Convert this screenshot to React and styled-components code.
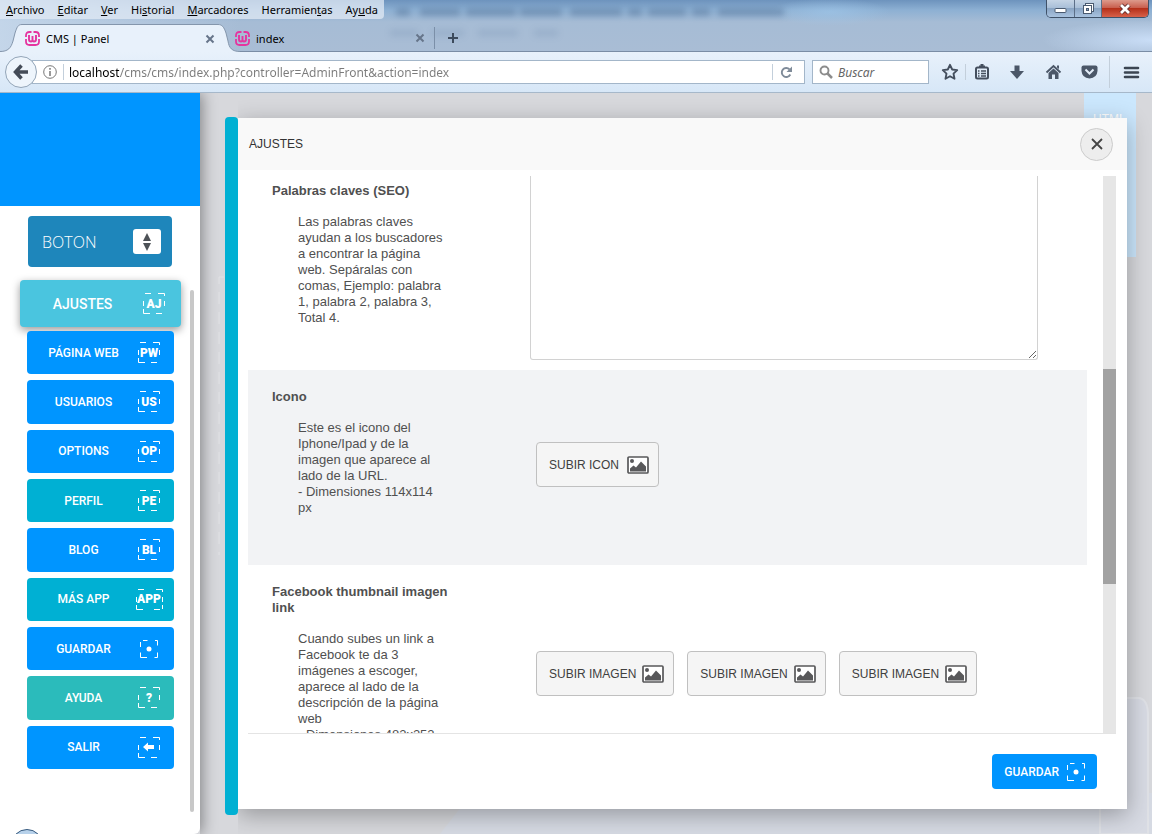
import React from 'react';
import styled, { createGlobalStyle, css } from 'styled-components';

const GlobalStyle = createGlobalStyle`
  *, *::before, *::after { box-sizing: border-box; }
  body { margin: 0; font-family: "Liberation Sans", Arial, sans-serif; }
  button { font: inherit; color: inherit; cursor: pointer; }
`;

const uiFont = css`
  font-family: "Noto Sans", "Open Sans", sans-serif;
  font-size: ${(p) => (p.$field ? 12 : 11)}px;
`;

const Window = styled.div`
  display: flex;
  flex-direction: column;
  height: 100vh;
  overflow: hidden;
`;

/* ---------- Browser chrome ---------- */

const TitleArea = styled.header`
  position: relative;
  flex: none;
  background:
    radial-gradient(ellipse 60px 14px at 830px 12px, rgba(160, 200, 235, 0.6), transparent),
    radial-gradient(ellipse 110px 20px at 100% 40px, rgba(205, 225, 250, 0.9), transparent),
    linear-gradient(90deg, rgba(205, 222, 240, 0.75) 0, rgba(205, 222, 240, 0) 240px),
    linear-gradient(#6d93bd 0, #8db0d3 10px, #a6bcd5 22px, #a9bdd5 100%);
`;

const Haze = styled.svg`
  position: absolute;
  top: 0;
  left: 384px;
  width: 420px;
  height: 50px;
`;

const HazeGroup = styled.g`
  filter: blur(3px);
`;

const MenuLine = styled.div`
  display: flex;
  justify-content: space-between;
  height: 24px;
  position: relative;
`;

const MenuBar = styled.nav`
  ${uiFont}
  display: flex;
  align-items: center;
  gap: 13px;
  height: 19px;
  padding: 0 6px;
  background: rgba(225, 234, 244, 0.75);
  border-bottom-right-radius: 4px;
`;

const MenuItem = styled.button`
  padding: 0;
  border: 0;
  background: none;
  color: #000;
  line-height: 16px;
`;

const WindowButtons = styled.div`
  display: flex;
  height: 18px;
  margin-right: 3px;
  border: 1px solid #3f5168;
  border-top: 0;
  border-radius: 0 0 5px 5px;
  overflow: hidden;
`;

const WindowButton = styled.button`
  display: grid;
  place-items: center;
  width: ${(p) => (p.$danger ? 47 : 27)}px;
  padding: 0;
  border: 0;
  border-left: ${(p) => (p.$first ? '0' : '1px solid #5c6f88')};
  background: ${(p) =>
    p.$danger
      ? 'linear-gradient(#dd9a8c 0, #c9604f 45%, #b5301a 50%, #d8614a 100%)'
      : 'linear-gradient(#c5d4e5 0, #a9bfd8 45%, #8aa5c4 50%, #a8c2df 100%)'};
`;

const TabStrip = styled.div`
  ${uiFont}
  position: relative;
  display: flex;
  height: 28px;
  color: #000;
  box-shadow: inset 0 -1px #7a8da5;
`;

const TabEdge = styled.svg`
  flex: none;
  width: 22px;
  height: 28px;
`;

const Tab = styled.div`
  display: flex;
  align-items: center;
  gap: 6px;
  width: 196px;
  height: 28px;
  padding: 0 3px;
  ${(p) =>
    p.$active
      ? css`background: #e8f1fb; border-top: 1px solid #8496ac;`
      : css`margin-left: -8px; margin-right: 6px;`}
`;

const TabTitle = styled.span`
  flex: 1;
`;

const IconButton = styled.button`
  display: grid;
  place-items: center;
  flex: none;
  padding: 0;
  border: 0;
  background: none;
`;

const NewTab = styled(IconButton)`
  width: 37px;
  height: 22px;
  margin-top: 3px;
  border-left: 1px solid #7b8fa8;
`;

const Toolbar = styled.div`
  display: flex;
  align-items: center;
  flex: none;
  height: 41px;
  padding-left: 5px;
  background: linear-gradient(#e8f1fb, #d7e7f7);
  border-bottom: 1px solid #a6b8ca;
`;

const BackButton = styled(IconButton)`
  z-index: 1;
  width: 32px;
  height: 32px;
  border: 1px solid #93a5b8;
  border-radius: 50%;
  background: #eef5fc;
`;

const AddressBar = styled.div`
  ${uiFont}
  display: flex;
  align-items: center;
  flex: 1;
  height: 24px;
  margin-left: -5px;
  padding: 0 4px 0 10px;
  background: #fff;
  border: 1px solid #a3b6c9;
`;

const UrlInput = styled.input`
  flex: 1;
  min-width: 0;
  margin: 0 0 0 5px;
  padding: 0;
  border: 0;
  font: inherit;
  color: transparent;
  background: linear-gradient(90deg, #000 50px, #7b7b7b 50px);
  background-clip: text;
`;

const Rule = styled.span`
  flex: none;
  width: 1px;
  height: ${(p) => p.$height}px;
  margin-left: ${(p) => p.$gap || 0}px;
  background: #c3cfdb;
`;

const SearchBox = styled.label`
  ${uiFont}
  display: flex;
  align-items: center;
  gap: 5px;
  width: 117px;
  height: 24px;
  margin: 0 10px 0 7px;
  padding: 0 6px;
  background: #fff;
  border: 1px solid #a3b6c9;
`;

const SearchInput = styled.input`
  width: 70px;
  padding: 0;
  border: 0;
  font: inherit;
  font-style: italic;
  &::placeholder { color: #666; opacity: 1; }
`;

const ToolButton = styled(IconButton)`
  width: ${(p) => p.$width}px;
  height: 24px;
`;

/* ---------- Page ---------- */

const Page = styled.div`
  position: relative;
  display: flex;
  flex: 1;
  min-height: 0;
  background: #d7d8dc;
`;

const Backdrop = styled.svg`
  position: absolute;
  inset: 0;
  width: 100%;
  height: 100%;
`;

const GhostPanel = styled.div`
  position: absolute;
  top: 0;
  right: 16px;
  width: 52px;
  height: 164px;
  padding: 18px 0 0 9px;
  background: #cbe7fd;
  color: #fff;
  font-size: 12px;
  line-height: 16px;
`;

const Sidebar = styled.aside`
  position: relative;
  display: flex;
  flex-direction: column;
  flex: none;
  width: 200px;
  overflow: hidden;
  background: #fff;
  border-bottom-right-radius: 6px;
`;

const SidebarShadow = styled.div`
  position: relative;
  display: flex;
  box-shadow: 2px 0 14px rgba(0, 0, 0, 0.4);
  clip-path: inset(0 -40px 0 0);
`;

const Brand = styled.div`
  flex: none;
  height: 113px;
  background: #0095ff;
`;

const Picker = styled.button`
  display: flex;
  align-items: center;
  justify-content: space-between;
  flex: none;
  height: 51px;
  margin: 10px 28px 13px;
  padding: 0 11px 0 14px;
  border: 0;
  border-radius: 4px;
  background: #1e86bb;
  color: #fff;
  font-family: "Open Sans", sans-serif;
  font-size: 16px;
  font-weight: 300;
`;

const PickerArrows = styled.span`
  display: grid;
  place-items: center;
  width: 28px;
  height: 25px;
  border-radius: 3px;
  background: #fff;
`;

const MenuScroll = styled.div`
  display: flex;
  justify-content: space-between;
  flex: 1;
  min-height: 0;
  padding: 0 6px 22px 20px;
`;

const SideNav = styled.nav`
  width: 161px;
`;

const SideList = styled.div`
  display: grid;
  grid-auto-rows: 1fr;
  gap: 6px;
  height: 438px;
  margin: 4px 7px 0;
`;

const SideBar = styled.div`
  width: 4px;
  margin-top: 10px;
  border-radius: 2px;
  background: #c8c8c8;
`;

const tones = { blue: '#0095ff', teal: '#00b0d3', green: '#2bbbbb', light: '#4ac5df' };

const SideButton = styled.button`
  display: flex;
  align-items: center;
  width: 100%;
  padding: 0 ${(p) => (p.$large ? 12 : 10)}px 0 6px;
  border: 0;
  border-radius: 4px;
  background: ${(p) => tones[p.$tone]};
  color: #fff;
  font-family: Roboto, sans-serif;
  font-weight: 500;
  font-size: 12px;
  ${(p) =>
    p.$large &&
    css`
      height: 47px;
      font-size: 14px;
      box-shadow: 0 3px 8px rgba(0, 0, 0, 0.4);
    `}
`;

const SideLabel = styled.span`
  flex: 1;
  text-align: center;
`;

const Badge = styled.span`
  position: relative;
  display: grid;
  place-items: center;
  width: 30px;
  height: 24px;
`;

const BadgeFrame = styled.svg`
  position: absolute;
  inset: 0;
  margin: auto;
`;

const BadgeText = styled.span`
  font-size: 12px;
  font-weight: 900;
  line-height: 16px;
`;

const CornerBubble = styled.span`
  position: absolute;
  left: 11px;
  bottom: -27px;
  width: 32px;
  height: 32px;
  border: 1px solid #36597d;
  border-radius: 50%;
  background: #b7d1ea;
`;

const Main = styled.main`
  position: relative;
  display: flex;
  flex: 1;
  min-width: 0;
  padding: 24px 25px 19px;
`;

const Spine = styled.div`
  flex: none;
  width: 13px;
  border-radius: 4px;
  background: #00b0d3;
`;

const Dialog = styled.section`
  display: flex;
  flex-direction: column;
  flex: 1;
  min-width: 0;
  margin: 1px 0 6px;
  background: #fff;
  box-shadow: 0 6px 22px rgba(0, 0, 0, 0.3);
  clip-path: inset(-24px -25px -40px 0);
`;

const DialogHeader = styled.div`
  display: flex;
  align-items: center;
  justify-content: space-between;
  flex: none;
  height: 52px;
  margin-bottom: 6px;
  padding: 0 14px 0 11px;
  background: #f9f9f9;
`;

const DialogTitle = styled.h1`
  margin: 0;
  color: #333;
  font-size: 12px;
  font-weight: 400;
  line-height: 16px;
`;

const CloseButton = styled(IconButton)`
  width: 33px;
  height: 33px;
  border: 1px solid #ccc;
  border-radius: 50%;
  background: #ededed;
`;

const DialogBody = styled.div`
  display: flex;
  flex: 1;
  min-height: 0;
  margin: 0 11px 0 10px;
  border-bottom: 1px solid #e4e4e4;
`;

const Rows = styled.div`
  flex: 1;
  min-width: 0;
  margin-right: 16px;
  overflow: hidden;
`;

const Row = styled.div`
  display: grid;
  grid-template-columns: 258px 1fr;
  min-height: ${(p) => p.$height}px;
  padding: ${(p) => (p.$cut ? '7px 49px 10px 24px' : '19px 49px 25px 24px')};
  background: ${(p) => (p.$shaded ? '#f2f3f5' : '#fff')};
  color: #505050;
  font-size: 13px;
  line-height: 16px;
`;

const RowTitle = styled.h2`
  display: block;
  width: 190px;
  margin: 0 0 15px;
  font-size: 13px;
  font-weight: 700;
`;

const RowHelp = styled.p`
  width: 148px;
  margin: 0 0 0 26px;
`;

const Keywords = styled.textarea`
  display: block;
  width: 100%;
  height: 184px;
  margin-top: -7px;
  border: 1px solid #d2d2d2;
  border-top: 0;
  border-radius: 0 0 3px 3px;
  background: #fff;
  resize: vertical;
`;

const Uploads = styled.div`
  display: flex;
  align-items: center;
  gap: 13px;
  padding-left: 6px;
`;

const UploadButton = styled.button`
  display: flex;
  align-items: center;
  justify-content: space-between;
  gap: 6px;
  min-width: 123px;
  height: 45px;
  padding: 0 9px 0 12px;
  border: 1px solid #c0c0c0;
  border-radius: 4px;
  background: #f5f5f5;
  color: #404040;
  font-size: 12px;
  white-space: nowrap;
`;

const ScrollTrack = styled.div`
  width: 13px;
  padding-top: 193px;
  background: #e6e6e6;
`;

const ScrollThumb = styled.div`
  height: 215px;
  background: #a2a2a2;
`;

const DialogFooter = styled.div`
  display: flex;
  justify-content: flex-end;
  flex: none;
  height: 75px;
  padding: 20px 30px;
`;

const SaveButton = styled.button`
  display: flex;
  align-items: center;
  gap: 8px;
  height: 35px;
  padding: 0 12px;
  border: 0;
  border-radius: 4px;
  background: #0095ff;
  color: #fff;
  font-family: Roboto, sans-serif;
  font-size: 12px;
  font-weight: 500;
`;

/* ---------- Drawings ---------- */

const Logo = () => (
  <svg width="15" height="15" viewBox="0 0 15 15" fill="none" stroke="#e5349f">
    <path d="M6.500 1H4.500Q1 1 1 4.500V6M8.500 1h2Q14 1 14 4.500V6M1 8v2.500Q1 14 4.500 14H10.500Q14 14 14 10.500V8" strokeWidth="1.800" />
    <path d="M4 4V8.500Q4 10.500 6 10.500Q7.500 10.500 7.500 8.500V5V8.500Q7.500 10.500 9 10.500Q11 10.500 11 8.500V4" strokeWidth="1.900" />
  </svg>
);

const TabClose = () => (
  <svg width="10" height="10" viewBox="0 0 10 10" stroke="#66758a" strokeWidth="2">
    <path d="M1.500 1.500l7 7M8.500 1.500l-7 7" />
  </svg>
);

const SaveMark = () => (
  <svg width="18" height="18" viewBox="0 0 18 18" fill="none" stroke="#fff">
    <path d="M3 .5H7.500M.5 2V7M.5 12.500V17.500H7M15 .5H17.500V5.500M17.500 12.500V17.500H14.500" />
    <circle cx="9" cy="9" r="2.500" fill="#fff" stroke="none" />
  </svg>
);

const Picture = () => (
  <svg width="22" height="18" viewBox="0 0 22 18">
    <rect x="1" y="1" width="20" height="16" rx="1" fill="#fff" stroke="#58585a" strokeWidth="1.700" />
    <circle cx="5" cy="5" r="2" fill="#58585a" />
    <path d="M3 15.500V12.500L6.500 9.500L9 11.500L14 5.500L19 10.500V15.500Z" fill="#58585a" />
  </svg>
);

const LetterFrame = ({ wide }) => {
  const w = wide ? 27 : 22;
  const r = w - 0.5;
  return (
    <BadgeFrame width={w} height="21" fill="none" stroke="#fff">
      <path d={`M2 .5H8M${w - 7} .5H${r}V3M${r} 8V13M.5 8V13M.5 16V20.500H7M${w - 9} 20.500H${w - 3}${wide ? `M${r} 16V20` : ''}`} />
    </BadgeFrame>
  );
};

const ArrowMark = () => (
  <svg width="12" height="10" viewBox="0 0 12 10" fill="#fff">
    <path d="M0 5L5 .5V3H11V7H5V9.500Z" />
  </svg>
);

const SideEntry = ({ label, mark, tone, large }) => (
  <SideButton $tone={tone} $large={large}>
    <SideLabel>{label}</SideLabel>
    <Badge>
      {mark === 'save' ? (
        <SaveMark />
      ) : (
        <>
          <LetterFrame wide={mark.length === 3} />
          {mark === 'exit' ? <ArrowMark /> : <BadgeText>{mark}</BadgeText>}
        </>
      )}
    </Badge>
  </SideButton>
);

const Upload = ({ children }) => (
  <UploadButton>
    {children}
    <Picture />
  </UploadButton>
);

const entries = [
  ['PÁGINA WEB', 'PW', 'blue'],
  ['USUARIOS', 'US', 'blue'],
  ['OPTIONS', 'OP', 'blue'],
  ['PERFIL', 'PE', 'teal'],
  ['BLOG', 'BL', 'blue'],
  ['MÁS APP', 'APP', 'teal'],
  ['GUARDAR', 'save', 'blue'],
  ['AYUDA', '?', 'green'],
  ['SALIR', 'exit', 'blue'],
];

const menus = [
  ['', 'A', 'rchivo'],
  ['', 'E', 'ditar'],
  ['', 'V', 'er'],
  ['Hi', 's', 'torial'],
  ['', 'M', 'arcadores'],
  ['Herramien', 't', 'as'],
  ['Ay', 'u', 'da'],
];

const Chrome = () => (
  <>
    <TitleArea>
      <Haze aria-hidden="true">
        <HazeGroup stroke="#4d6c92" strokeWidth="7" opacity="0.5">
          <path d="M12 12H26M36 12H76M82 12H132M136 12H178M186 12H238M244 12H258M264 12H302M308 12H326M334 12H400" />
          <path d="M6 33H34M48 33H80M94 33H134M150 33H174" opacity="0.3" />
        </HazeGroup>
      </Haze>
      <MenuLine>
        <MenuBar>
          {menus.map(([a, k, b]) => (
            <MenuItem key={k + b}>{a}<u>{k}</u>{b}</MenuItem>
          ))}
        </MenuBar>
        <WindowButtons>
          <WindowButton $first aria-label="Minimizar">
            <svg width="13" height="13"><rect x="1" y="6.500" width="11" height="4" rx="1" fill="#fff" stroke="#4a5a70" /></svg>
          </WindowButton>
          <WindowButton aria-label="Restaurar">
            <svg width="13" height="13" fill="none">
              <rect x="3.500" y="1.500" width="8" height="8" fill="#fff" stroke="#4a5a70" />
              <rect x="1.500" y="3.500" width="8" height="8" fill="#fff" stroke="#4a5a70" />
              <rect x="4.500" y="6.500" width="2" height="2" fill="#8aa5c4" stroke="#4a5a70" />
            </svg>
          </WindowButton>
          <WindowButton $danger aria-label="Cerrar">
            <svg width="14" height="12" viewBox="0 0 14 12" fill="none">
              <path d="M3 2L11 10M11 2L3 10" stroke="#5b2a2a" strokeWidth="4.500" />
              <path d="M3 2L11 10M11 2L3 10" stroke="#fff" strokeWidth="2.800" />
            </svg>
          </WindowButton>
        </WindowButtons>
      </MenuLine>
      <TabStrip>
        <TabEdge viewBox="0 0 22 28">
          <path d="M0 28V27.500C8 27.500 11 24 13 17L15 9C17 3 18 .5 22 .5V28Z" fill="#e8f1fb" />
          <path d="M0 27.500C8 27.500 11 24 13 17L15 9C17 3 18 .5 22 .5" fill="none" stroke="#8496ac" />
        </TabEdge>
        <Tab $active>
          <Logo />
          <TabTitle>CMS | Panel</TabTitle>
          <IconButton aria-label="Cerrar pestaña"><TabClose /></IconButton>
        </Tab>
        <TabEdge viewBox="0 0 22 28">
          <path d="M22 28V27.500C14 27.500 11 24 10 17L8 9C6 3 4 .5 0 .5V28Z" fill="#e8f1fb" />
          <path d="M22 27.500C14 27.500 11 24 10 17L8 9C6 3 4 .5 0 .5" fill="none" stroke="#8496ac" />
        </TabEdge>
        <Tab>
          <Logo />
          <TabTitle>index</TabTitle>
          <IconButton aria-label="Cerrar pestaña"><TabClose /></IconButton>
        </Tab>
        <NewTab aria-label="Nueva pestaña">
          <svg width="12" height="12" stroke="#3c4a5c" strokeWidth="2"><path d="M6 1V11M1 6H11" /></svg>
        </NewTab>
      </TabStrip>
    </TitleArea>
    <Toolbar>
      <BackButton aria-label="Atrás">
        <svg width="16" height="16" viewBox="0 0 16 16" fill="none" stroke="#444c58" strokeWidth="3.500">
          <path d="M8.500 1.500L2.500 8L8.500 14.500M3 8H15" />
        </svg>
      </BackButton>
      <AddressBar $field>
        <svg width="14" height="14" viewBox="0 0 14 14" fill="none" stroke="#777">
          <circle cx="7" cy="7" r="6.300" />
          <path d="M7 6V11M7 3V4.700" strokeWidth="1.500" />
        </svg>
        <Rule $height={16} $gap={6} />
        <UrlInput aria-label="Dirección" defaultValue="localhost/cms/cms/index.php?controller=AdminFront&action=index" />
        <Rule $height={16} />
        <ToolButton $width={27} aria-label="Recargar">
          <svg width="13" height="13" viewBox="0 0 13 13" fill="none">
            <path d="M10.300 8.500A4.500 4.500 0 1 1 9.500 3.300" stroke="#7f8b99" strokeWidth="1.900" />
            <path d="M12 .5V6H6.500Z" fill="#7f8b99" />
          </svg>
        </ToolButton>
      </AddressBar>
      <SearchBox $field>
        <svg width="14" height="14" viewBox="0 0 14 14" fill="none" stroke="#8c8c8c">
          <circle cx="5.500" cy="5.500" r="4" strokeWidth="1.900" />
          <path d="M8.500 8.500L13 13" strokeWidth="2.500" />
        </svg>
        <SearchInput aria-label="Buscar" placeholder="Buscar" />
      </SearchBox>
      <ToolButton $width={22} aria-label="Marcador">
        <svg width="18" height="18" viewBox="0 0 18 18" fill="none" stroke="#444f5e" strokeWidth="1.900">
          <path d="M9 1.800L11.200 6.500L16.200 7.100L12.500 10.600L13.500 15.800L9 13.200L4.500 15.800L5.500 10.600L1.800 7.100L6.800 6.500Z" strokeLinejoin="round" />
        </svg>
      </ToolButton>
      <Rule $height={16} $gap={4} />
      <ToolButton $width={31} aria-label="Lista">
        <svg width="16" height="16" viewBox="0 0 16 16" fill="none" stroke="#444f5e">
          <rect x="2" y="3.500" width="12" height="11" rx="1.500" strokeWidth="2" />
          <path d="M5 2.500H11M6.500 1H9.500" strokeWidth="2" />
          <path d="M4 7H5.500M7 7H12M4 9.500H5.500M7 9.500H12M4 12H5.500M7 12H12" strokeWidth="1.300" />
        </svg>
      </ToolButton>
      <ToolButton $width={40} aria-label="Descargas">
        <svg width="16" height="16" viewBox="0 0 16 16" fill="#4b5768"><path d="M5.500 1.500H10.500V7H15L8 15L1 7H5.500Z" /></svg>
      </ToolButton>
      <ToolButton $width={32} aria-label="Inicio">
        <svg width="17" height="16" viewBox="0 0 17 16" fill="#4b5768">
          <path d="M1.500 8.500L8.500 2L15.500 8.500" fill="none" stroke="#4b5768" strokeWidth="1.900" />
          <path d="M12 1.500H14V5L12 3.500ZM3.500 9L8.500 4.500L13.500 9V15H10V10.500H7V15H3.500Z" />
        </svg>
      </ToolButton>
      <ToolButton $width={40} aria-label="Pocket">
        <svg width="17" height="16" viewBox="0 0 17 16">
          <path d="M2.500 1.500H14.500Q16.500 1.500 16.500 3.500V7Q16 14 8.500 14.500Q1 14 .5 7V3.500Q.5 1.500 2.500 1.500Z" fill="#4b5768" />
          <path d="M4.500 5.500L8.500 9.500L12.500 5.500" fill="none" stroke="#e3edf8" strokeWidth="2" />
        </svg>
      </ToolButton>
      <Rule $height={32} />
      <ToolButton $width={42} aria-label="Menú">
        <svg width="17" height="13" stroke="#3b4552" strokeWidth="2.600" strokeLinecap="round"><path d="M2 2H15M2 6.500H15M2 11H15" /></svg>
      </ToolButton>
    </Toolbar>
  </>
);

export default function App() {
  return (
    <Window>
      <GlobalStyle />
      <Chrome />
      <Page>
        <Backdrop viewBox="0 0 1152 741" preserveAspectRatio="none" aria-hidden="true">
          <path d="M440 741L472 700H1152V741Z" fill="#d6dae3" />
          <path d="M1100 605H1138Q1147 605 1148 620V741H1100Z" fill="#d7dae3" stroke="#dfe1e6" strokeWidth="2" />
          <path d="M224 184H219V462" fill="none" stroke="#e1e2e5" strokeDasharray="12 8" />
        </Backdrop>
        <GhostPanel>HTML</GhostPanel>
        <SidebarShadow>
          <Sidebar>
            <Brand />
            <Picker>
              BOTON
              <PickerArrows>
                <svg width="10" height="18" viewBox="0 0 10 18" fill="#4d5257"><path d="M5 0L9 8H1ZM5 18L9 10H1Z" /></svg>
              </PickerArrows>
            </Picker>
            <MenuScroll>
              <SideNav>
                <SideEntry label="AJUSTES" mark="AJ" tone="light" large />
                <SideList>
                  {entries.map(([label, mark, tone]) => (
                    <SideEntry key={label} label={label} mark={mark} tone={tone} />
                  ))}
                </SideList>
              </SideNav>
              <SideBar />
            </MenuScroll>
            <CornerBubble />
          </Sidebar>
        </SidebarShadow>
        <Main>
          <Spine />
          <Dialog>
            <DialogHeader>
              <DialogTitle>AJUSTES</DialogTitle>
              <CloseButton aria-label="Cerrar">
                <svg width="12" height="12" stroke="#444" strokeWidth="1.800"><path d="M1 1L11 11M11 1L1 11" /></svg>
              </CloseButton>
            </DialogHeader>
            <DialogBody>
              <Rows>
                <Row $cut $height={194}>
                  <div>
                    <RowTitle as="label" htmlFor="keywords">Palabras claves (SEO)</RowTitle>
                    <RowHelp>
                      Las palabras claves ayudan a los buscadores a encontrar la página web. Sepáralas con
                      comas, Ejemplo: palabra 1, palabra 2, palabra 3, Total 4.
                    </RowHelp>
                  </div>
                  <Keywords id="keywords" />
                </Row>
                <Row $shaded $height={195}>
                  <div>
                    <RowTitle>Icono</RowTitle>
                    <RowHelp>
                      Este es el icono del Iphone/Ipad y de la imagen que aparece al lado de la URL.
                      <br />- Dimensiones 114x114 px
                    </RowHelp>
                  </div>
                  <Uploads>
                    <Upload>SUBIR ICON</Upload>
                  </Uploads>
                </Row>
                <Row $height={223}>
                  <div>
                    <RowTitle>Facebook thumbnail imagen link</RowTitle>
                    <RowHelp>
                      Cuando subes un link a Facebook te da 3 imágenes a escoger, aparece al lado de la
                      descripción de la página web
                      <br />- Dimensiones 482x252
                    </RowHelp>
                  </div>
                  <Uploads>
                    <Upload>SUBIR IMAGEN</Upload>
                    <Upload>SUBIR IMAGEN</Upload>
                    <Upload>SUBIR IMAGEN</Upload>
                  </Uploads>
                </Row>
              </Rows>
              <ScrollTrack>
                <ScrollThumb />
              </ScrollTrack>
            </DialogBody>
            <DialogFooter>
              <SaveButton>
                GUARDAR
                <SaveMark />
              </SaveButton>
            </DialogFooter>
          </Dialog>
        </Main>
      </Page>
    </Window>
  );
}
